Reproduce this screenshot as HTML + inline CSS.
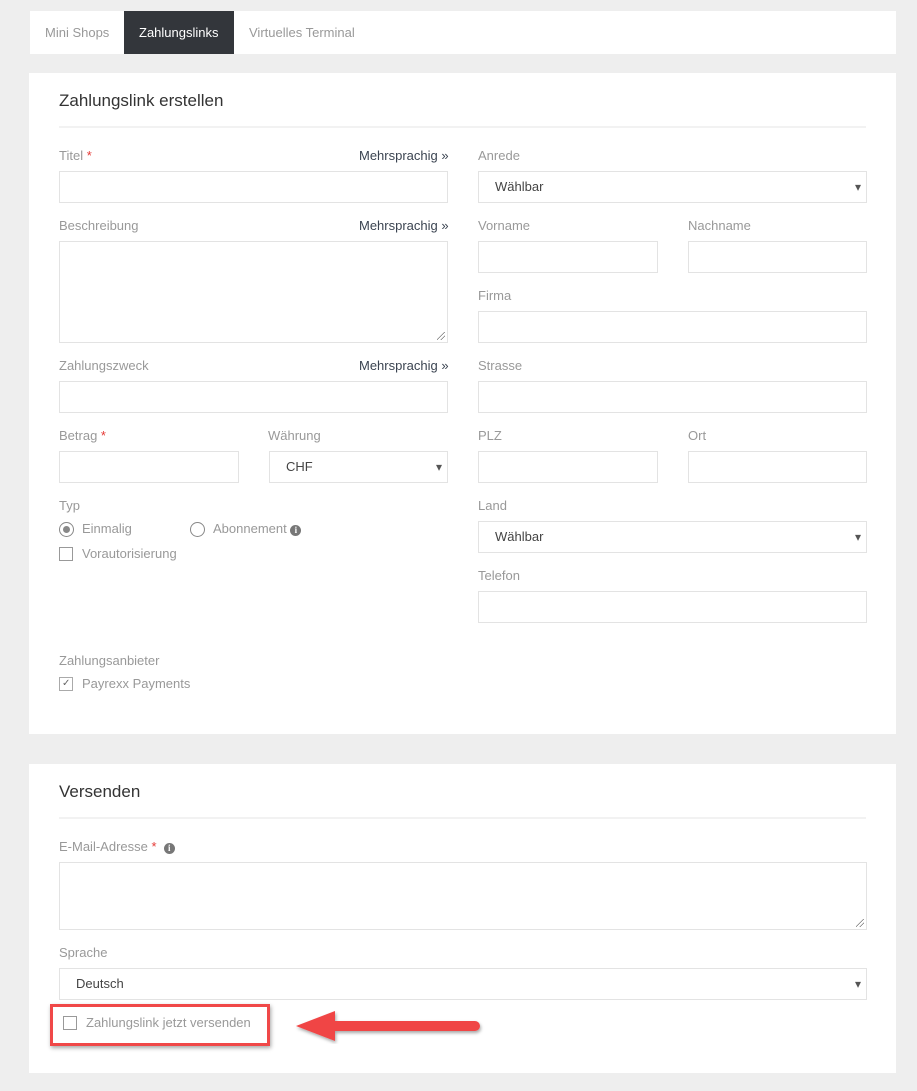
<!DOCTYPE html>
<html><head><meta charset="utf-8"><style>
*{box-sizing:border-box;margin:0;padding:0}
body{width:917px;height:1091px;background:#eeeeee;font-family:"Liberation Sans",sans-serif;position:relative;overflow:hidden}
.a{position:absolute}
.card{position:absolute;background:#fff;left:29px;width:867px}
.l{position:absolute;font-size:13px;color:#999;line-height:16px;white-space:nowrap}
.r{color:#e53935}
.m{position:absolute;font-size:13px;color:#3b4451;line-height:16px;white-space:nowrap}
.i{position:absolute;border:1px solid #e3e3e3;background:#fff;height:32px}
.s{font-size:13px;color:#444;line-height:30px;padding-left:16px}
.s:after{content:"\25BE";position:absolute;right:5px;top:0;font-size:12px;color:#555}
.cb{position:absolute;width:14px;height:14px;border:1px solid #999;background:#fff}
.rd{position:absolute;width:15px;height:15px;border:1px solid #888;border-radius:50%;background:#fff}
.info{display:inline-block;width:11px;height:11px;border-radius:50%;background:#777;color:#fff;font-size:9px;line-height:11px;text-align:center;font-weight:bold;font-family:"Liberation Serif",serif;vertical-align:0}
.grip{position:absolute;right:2px;bottom:2px;width:8px;height:8px;background:linear-gradient(135deg,transparent 45%,#777 45%,#777 52%,transparent 52%,transparent 70%,#777 70%,#777 77%,transparent 77%)}
</style></head><body>

<div class="a" style="left:30px;top:11px;width:866px;height:43px;background:#fff"></div>
<div class="a" style="left:45px;top:25px;font-size:13px;color:#999">Mini Shops</div>
<div class="a" style="left:124px;top:11px;width:110px;height:43px;background:#33363b"></div>
<div class="a" style="left:139px;top:25px;font-size:13px;color:#fff">Zahlungslinks</div>
<div class="a" style="left:249px;top:25px;font-size:13px;color:#999">Virtuelles Terminal</div>

<div class="card" style="top:73px;height:661px"></div>
<div class="a" style="left:59px;top:91px;font-size:17px;color:#333">Zahlungslink erstellen</div>
<div class="a" style="left:59px;top:126px;width:807px;height:2px;background:#f2f2f2"></div>

<div class="l" style="left:59px;top:148px">Titel <span class="r">*</span></div>
<div class="m" style="left:359px;top:148px">Mehrsprachig »</div>
<div class="i" style="left:59px;top:171px;width:389px"></div>

<div class="l" style="left:59px;top:218px">Beschreibung</div>
<div class="m" style="left:359px;top:218px">Mehrsprachig »</div>
<div class="i" style="left:59px;top:241px;width:389px;height:102px"><div class="grip"></div></div>

<div class="l" style="left:59px;top:358px">Zahlungszweck</div>
<div class="m" style="left:359px;top:358px">Mehrsprachig »</div>
<div class="i" style="left:59px;top:381px;width:389px"></div>

<div class="l" style="left:59px;top:428px">Betrag <span class="r">*</span></div>
<div class="i" style="left:59px;top:451px;width:180px"></div>
<div class="l" style="left:268px;top:428px">Währung</div>
<div class="i s" style="left:269px;top:451px;width:179px">CHF</div>

<div class="l" style="left:59px;top:498px">Typ</div>
<div class="rd" style="left:59px;top:522px"></div><div class="a" style="left:63px;top:526px;width:7px;height:7px;border-radius:50%;background:#888"></div>
<div class="l" style="left:82px;top:521px">Einmalig</div>
<div class="rd" style="left:190px;top:522px"></div>
<div class="l" style="left:213px;top:521px">Abonnement <span class="info">i</span></div>
<div class="cb" style="left:59px;top:547px"></div>
<div class="l" style="left:82px;top:546px">Vorautorisierung</div>

<div class="l" style="left:59px;top:653px">Zahlungsanbieter</div>
<div class="cb" style="left:59px;top:677px;border-color:#aaa"></div>
<div class="a" style="left:62px;top:678px;font-size:10px;color:#666">✓</div>
<div class="l" style="left:82px;top:676px">Payrexx Payments</div>

<div class="l" style="left:478px;top:148px">Anrede</div>
<div class="i s" style="left:478px;top:171px;width:389px">Wählbar</div>
<div class="l" style="left:478px;top:218px">Vorname</div>
<div class="i" style="left:478px;top:241px;width:180px"></div>
<div class="l" style="left:688px;top:218px">Nachname</div>
<div class="i" style="left:688px;top:241px;width:179px"></div>
<div class="l" style="left:478px;top:288px">Firma</div>
<div class="i" style="left:478px;top:311px;width:389px"></div>
<div class="l" style="left:478px;top:358px">Strasse</div>
<div class="i" style="left:478px;top:381px;width:389px"></div>
<div class="l" style="left:478px;top:428px">PLZ</div>
<div class="i" style="left:478px;top:451px;width:180px"></div>
<div class="l" style="left:688px;top:428px">Ort</div>
<div class="i" style="left:688px;top:451px;width:179px"></div>
<div class="l" style="left:478px;top:498px">Land</div>
<div class="i s" style="left:478px;top:521px;width:389px">Wählbar</div>
<div class="l" style="left:478px;top:568px">Telefon</div>
<div class="i" style="left:478px;top:591px;width:389px"></div>

<div class="card" style="top:764px;height:309px"></div>
<div class="a" style="left:59px;top:782px;font-size:17px;color:#333">Versenden</div>
<div class="a" style="left:59px;top:817px;width:807px;height:2px;background:#f2f2f2"></div>
<div class="l" style="left:59px;top:839px">E-Mail-Adresse <span class="r">*</span> &nbsp;<span class="info">i</span></div>
<div class="i" style="left:59px;top:862px;width:808px;height:68px"><div class="grip"></div></div>
<div class="l" style="left:59px;top:945px">Sprache</div>
<div class="i s" style="left:59px;top:968px;width:808px">Deutsch</div>

<div class="a" style="left:50px;top:1004px;width:220px;height:42px;border:3px solid #f04848;box-shadow:1px 2px 4px rgba(0,0,0,.35)"></div>
<div class="cb" style="left:63px;top:1016px"></div>
<div class="l" style="left:86px;top:1015px">Zahlungslink jetzt versenden</div>

<svg class="a" style="left:290px;top:1005px" width="200" height="45">
<defs><filter id="f"><feDropShadow dx="1" dy="2" stdDeviation="1.5" flood-opacity=".35"/></filter></defs>
<g filter="url(#f)" fill="#f04444">
<rect x="40" y="16" width="150" height="10" rx="5"/>
<polygon points="6,21 45,6 45,36"/>
</g></svg>
</body></html>
